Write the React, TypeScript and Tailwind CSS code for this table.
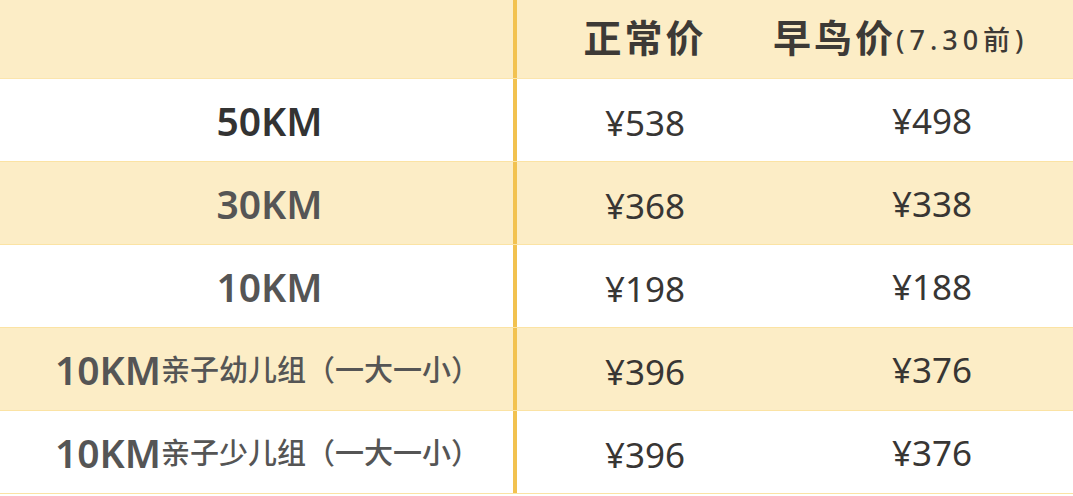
import React from "react";

const rows = [
  { km: "50KM", sub: "", normal: "¥538", early: "¥498", bg: "bg-white", color: "text-[#333333]" },
  { km: "30KM", sub: "", normal: "¥368", early: "¥338", bg: "bg-[#fcedc6]", color: "text-[#555555]" },
  { km: "10KM", sub: "", normal: "¥198", early: "¥188", bg: "bg-white", color: "text-[#555555]" },
  { km: "10KM", sub: "亲子幼儿组（一大一小）", normal: "¥396", early: "¥376", bg: "bg-[#fcedc6]", color: "text-[#555555]" },
  { km: "10KM", sub: "亲子少儿组（一大一小）", normal: "¥396", early: "¥376", bg: "bg-white", color: "text-[#555555]" },
];

const font = { fontFamily: '"Noto Sans", "Noto Sans CJK SC", sans-serif' };

export default function App() {
  return (
    <div className="w-[1073px] h-[496px] bg-white overflow-hidden" style={font}>
      <div className="flex h-[79px] bg-[#fcedc6] border-b border-[#fbe5ad]">
        <div className="w-[517px] border-r-[4px] border-[#f2c250]" />
        <div className="w-[256px] flex items-center justify-center">
          <span className="text-[38px] font-semibold text-[#3d3a36] tracking-[3px] leading-none pb-[4px]">正常价</span>
        </div>
        <div className="flex-1 flex items-center pb-[4px]">
          <span className="text-[38px] font-semibold text-[#3d3a36] tracking-[3px] leading-none">早鸟价</span>
          <span className="text-[27px] font-medium text-[#3d3a36] tracking-[5px] leading-none pt-[4px]">(7.30前)</span>
        </div>
      </div>
      {rows.map((r, i) => (
        <div key={i} className={`flex h-[83px] ${r.bg} border-b border-[#fbe3a4]`}>
          <div className={`w-[517px] border-r-[4px] border-[#f2c250] flex items-center justify-center ${r.sub ? "pl-[22px]" : "pl-[26px]"}`}>
            <span className={`text-[39px] font-semibold leading-none ${r.color}`}>{r.km}</span>
            {r.sub && (
              <span className="text-[29px] font-medium leading-none text-[#555555]">{r.sub}</span>
            )}
          </div>
          <div className="w-[256px] flex items-center justify-center pt-[4px]">
            <span className="text-[35px] leading-none text-[#383634]">{r.normal}</span>
          </div>
          <div className="flex-1 flex items-center justify-center pl-[18px]">
            <span className="text-[35px] leading-none text-[#383634]">{r.early}</span>
          </div>
        </div>
      ))}
    </div>
  );
}
